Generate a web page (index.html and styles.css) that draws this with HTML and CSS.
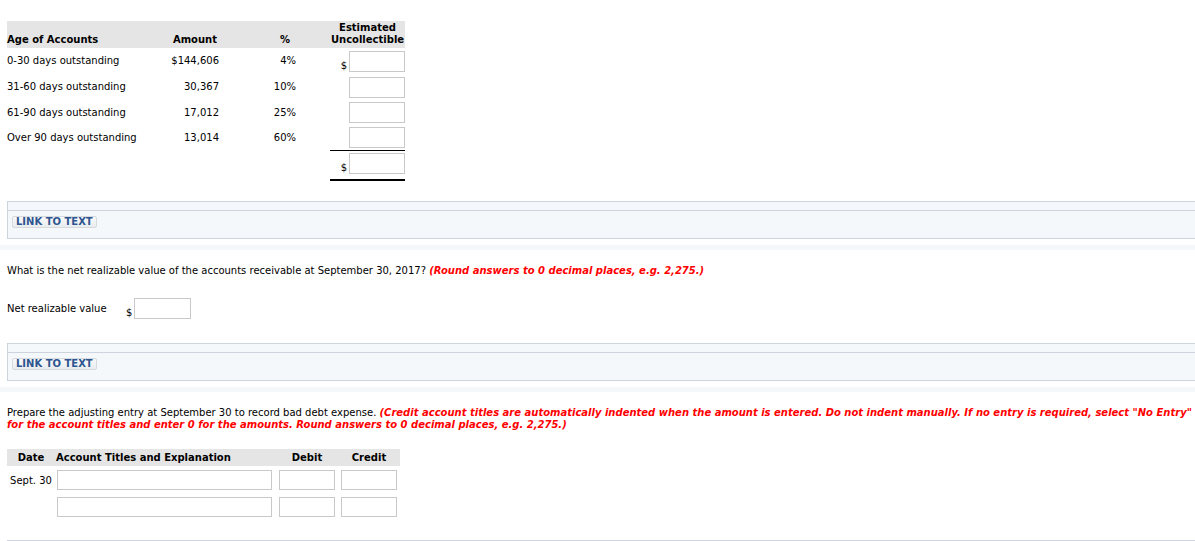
FILE: index.html
```html
<!DOCTYPE html>
<html>
<head>
<meta charset="utf-8">
<link rel="stylesheet" href="styles.css">
</head>
<body>
<div class="page">
  <table class="aging">
    <colgroup>
      <col class="c-age"><col class="c-amt"><col class="c-pct"><col class="c-gap"><col class="c-est">
    </colgroup>
    <thead>
      <tr>
        <th class="h-age">Age of Accounts</th>
        <th class="h-amt">Amount</th>
        <th class="h-pct">%</th>
        <th></th>
        <th class="h-est">Estimated<br>Uncollectible</th>
      </tr>
    </thead>
    <tbody>
      <tr class="r1">
        <td class="lbl">0-30 days outstanding</td><td class="num">$144,606</td><td class="num">4%</td><td></td>
        <td class="est"><div class="cell"><span class="dollar">$</span><input class="fld" type="text"></div></td>
      </tr>
      <tr class="r2">
        <td class="lbl">31-60 days outstanding</td><td class="num">30,367</td><td class="num">10%</td><td></td>
        <td class="est"><div class="cell"><input class="fld" type="text"></div></td>
      </tr>
      <tr class="r3">
        <td class="lbl">61-90 days outstanding</td><td class="num">17,012</td><td class="num">25%</td><td></td>
        <td class="est"><div class="cell"><input class="fld" type="text"></div></td>
      </tr>
      <tr class="r4">
        <td class="lbl">Over 90 days outstanding</td><td class="num">13,014</td><td class="num">60%</td><td></td>
        <td class="est"><div class="cell"><input class="fld" type="text"></div></td>
      </tr>
      <tr class="rt">
        <td></td><td></td><td></td><td></td>
        <td class="est total"><div class="cell"><span class="dollar">$</span><input class="fld" type="text"></div></td>
      </tr>
    </tbody>
  </table>

  <div class="panel first">
    <div class="panel-head"></div>
    <div class="panel-body"><button class="link-btn" type="button">LINK TO TEXT</button></div>
  </div>
  <div class="strip"></div>

  <p class="q q-nrv">What is the net realizable value of the accounts receivable at September 30, 2017? <span class="hint">(Round answers to 0 decimal places, e.g. 2,275.)</span></p>

  <div class="nrv">
    <span class="nrv-label">Net realizable value</span>
    <span class="dollar">$</span><input class="fld nrv-fld" type="text">
  </div>

  <div class="panel second">
    <div class="panel-head"></div>
    <div class="panel-body"><button class="link-btn" type="button">LINK TO TEXT</button></div>
  </div>
  <div class="strip"></div>

  <p class="q q-adj">Prepare the adjusting entry at September 30 to record bad debt expense. <span class="hint">(Credit account titles are automatically indented when the amount is entered. Do not indent manually. If no entry is required, select "No Entry"<br>for the account titles and enter 0 for the amounts. Round answers to 0 decimal places, e.g. 2,275.)</span></p>

  <table class="journal">
    <colgroup>
      <col class="j-date"><col class="j-acct"><col class="j-dr"><col class="j-cr">
    </colgroup>
    <thead>
      <tr><th class="jh-date">Date</th><th class="jh-acct">Account Titles and Explanation</th><th class="jh-amt">Debit</th><th class="jh-amt">Credit</th></tr>
    </thead>
    <tbody>
      <tr class="jr1">
        <td class="jdate">Sept. 30</td>
        <td class="jacct"><input class="fld acct-fld" type="text"></td>
        <td class="jamt"><input class="fld amt-fld" type="text"></td>
        <td class="jamt"><input class="fld amt-fld" type="text"></td>
      </tr>
      <tr class="jr2">
        <td class="jdate"></td>
        <td class="jacct"><input class="fld acct-fld" type="text"></td>
        <td class="jamt"><input class="fld amt-fld" type="text"></td>
        <td class="jamt"><input class="fld amt-fld" type="text"></td>
      </tr>
    </tbody>
  </table>

  <div class="panel last"></div>
</div>
</body>
</html>
```

FILE: styles.css
```css
html, body {
  margin: 0;
  padding: 0;
  background: #fff;
  overflow: hidden;
}
body {
  font-family: "DejaVu Sans", Verdana, sans-serif;
  font-size: 10px;
  color: #000;
}
.page {
  padding-left: 7px;
}

/* aging table */
.aging {
  border-collapse: collapse;
  margin-top: 21px;
  table-layout: fixed;
  width: 398px;
}
.c-age { width: 120px; }
.c-amt { width: 92px; }
.c-pct { width: 77px; }
.c-gap { width: 34px; }
.c-est { width: 75px; }
.aging th {
  background: #e5e5e5;
  font-weight: bold;
  vertical-align: bottom;
  padding: 1px 0 2px;
  line-height: 12px;
  height: 24px;
  white-space: nowrap;
}
.h-age { text-align: left; }
.h-amt { text-align: right; padding-right: 2px !important; }
.h-pct { text-align: right; padding-right: 6px !important; }
.h-est { text-align: center; }
.aging td {
  padding: 0;
  vertical-align: middle;
  line-height: 12px;
  white-space: nowrap;
}
.aging .r1 td, .aging .r2 td { height: 26px; }
.aging .r3 td, .aging .r4 td { height: 25px; }
.aging .num { text-align: right; }
.aging .cell {
  display: flex;
  justify-content: flex-end;
  align-items: flex-end;
}
.aging .total {
  height: auto;
}
.aging .total .cell {
  border-top: 1px solid #000;
  border-bottom: 2px solid #000;
  padding: 2px 0 5px;
}
.dollar {
  font-size: 10px;
  line-height: 10px;
  margin-right: 2px;
  margin-bottom: 1px;
}
.fld {
  box-sizing: border-box;
  height: 21px;
  width: 56px;
  border: 1px solid #c9c9c9;
  background: #fff;
  margin: 0;
  padding: 0 3px;
  font: inherit;
  display: block;
}

/* link panels */
.panel {
  border: 1px solid #cdd4de;
  border-right: none;
  background: #f5f8fb;
}
.panel.first { margin-top: 20px; }
.panel-head {
  height: 8px;
  border-bottom: 1px solid #cdd4de;
}
.panel-body {
  height: 27px;
  padding: 5px 0 0 4px;
  box-sizing: border-box;
}
.link-btn {
  display: block;
  margin: 0;
  padding: 0 3px;
  height: 12px;
  font-family: "DejaVu Sans", Verdana, sans-serif;
  font-size: 10px;
  font-weight: bold;
  line-height: 10px;
  color: #2d5590;
  background: linear-gradient(#f9f9f9, #e9ecef);
  border: 1px solid #d6d9dd;
  border-radius: 2px;
}
.strip {
  height: 5px;
  margin-top: 6px;
  margin-left: -7px;
  background: #f5f8fb;
}

/* questions */
.q {
  margin: 0;
  line-height: 12px;
}
.q-nrv { margin-top: 15px; }
.q-adj { margin-top: 15px; white-space: nowrap; }
.hint {
  color: #ff0000;
  font-style: italic;
  font-weight: bold;
}

.nrv {
  display: flex;
  align-items: flex-end;
  margin-top: 21px;
}
.nrv-label {
  width: 119px;
  align-self: center;
}
.nrv-fld { width: 57px; }
.panel.second { margin-top: 24px; }

/* journal table */
.journal {
  border-collapse: collapse;
  table-layout: fixed;
  width: 393px;
  margin-top: 18px;
}
.j-date { width: 48px; }
.j-acct { width: 221px; }
.j-dr { width: 62px; }
.j-cr { width: 62px; }
.journal th {
  background: #e5e5e5;
  font-weight: bold;
  height: 17px;
  padding: 0;
  line-height: 12px;
  vertical-align: middle;
}
.jh-date { text-align: center; }
.jh-acct { text-align: left; padding-left: 1px !important; }
.jh-amt { text-align: center; }
.journal td {
  padding: 4px 0 3px;
  vertical-align: middle;
}
.jdate { text-align: center; }
.acct-fld { width: 215px; height: 20px; margin-left: 2px; }
.amt-fld { width: 56px; height: 20px; margin: 0 auto; }
.panel.last {
  margin-top: 20px;
  height: 20px;
  background: #fff;
}
```
